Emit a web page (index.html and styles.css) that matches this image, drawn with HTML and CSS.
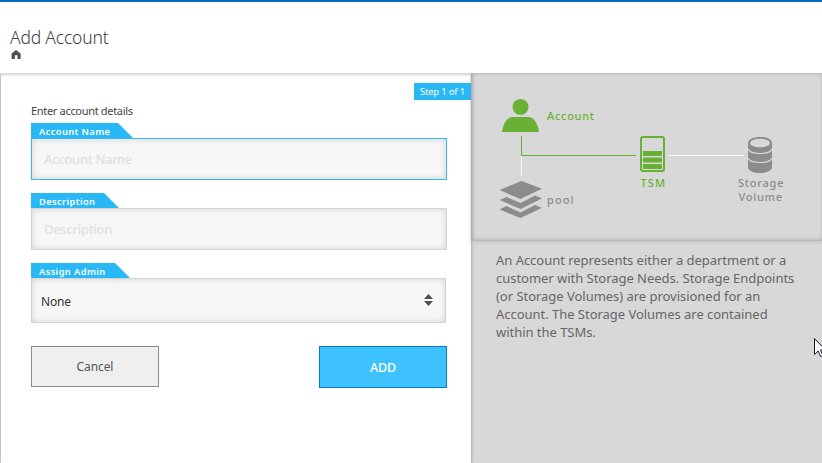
FILE: index.html
```html
<!DOCTYPE html>
<html lang="en">
<head>
<meta charset="utf-8">
<title>Add Account</title>
<link rel="stylesheet" href="styles.css">
</head>
<body>
<header class="header">
  <h1 class="title">Add Account</h1>
  <svg class="home" width="10" height="9" viewBox="0 0 10 9"><path d="M5 0L9.600 3.600V9H6.500V5.300H3.900V9H.6V3.600Z" fill="#505050"/></svg>
</header>
<main class="main">
  <form class="form">
    <div class="step">Step 1 of 1</div>
    <p class="intro">Enter account details</p>
    <div class="field">
      <label class="tab tab-name" for="name"><span>Account Name</span></label>
      <input class="input active" id="name" placeholder="Account Name">
    </div>
    <div class="field">
      <label class="tab tab-desc" for="desc"><span>Description</span></label>
      <input class="input" id="desc" placeholder="Description">
    </div>
    <div class="field field-select">
      <div class="tab tab-admin"><span>Assign Admin</span></div>
      <div class="select"><span>None</span>
        <svg width="9" height="12" viewBox="0 0 9 12"><path d="M0 5L4.5 0L9 5ZM0 7L4.5 12L9 7Z" fill="#505050"/></svg>
      </div>
    </div>
    <div class="actions">
      <button class="btn cancel" type="button">Cancel</button>
      <button class="btn add" type="button">ADD</button>
    </div>
  </form>
  <aside class="side">
    <div class="diagram">
      <svg width="351" height="167" viewBox="471 73 351 167">
        <g fill="#69b135">
          <circle cx="520.5" cy="107" r="8"/>
          <path d="M502 132C503 125 506 117 513 117H528C535 117 538 125 539 132Z"/>
        </g>
        <path d="M521.5 156V176" stroke="#fff"/>
        <path d="M521.5 136V155.5H636" fill="none" stroke="#69b135"/>
        <path d="M668 155.500H744" stroke="#fff"/>
        <g fill="#8c8c8c">
          <path d="M499.500 190L521.500 181L542 188.800L520.500 199Z"/>
          <path d="M499.500 200L506.500 197L520.500 203L535 195.500L542 198.500L520.500 209Z"/>
          <path d="M499.500 209.500L506.500 206L520.500 212.500L535 205L542 207.800L520.500 218Z"/>
        </g>
        <rect x="641" y="137" width="23" height="34" rx="2" fill="none" stroke="#69b135" stroke-width="2"/>
        <path d="M643 151H662V156H643ZM643 157.500H662V162.500H643ZM643 164H662V169H643Z" fill="#69b135"/>
        <path d="M643.500 153.500H661.500M643.500 160H661.500M643.500 166.500H661.500" stroke="#5faa2d" stroke-width=".7"/>
        <path d="M748 143C748 135 772 135 772 143V167C772 175 748 175 748 167Z" fill="#8c8c8c"/>
        <ellipse cx="760" cy="143" rx="10" ry="4.300" fill="#d8d8d8"/>
        <path d="M748 149C750 155 770 155 772 149M748 158C750 164 770 164 772 158" fill="none" stroke="#d8d8d8" stroke-width="1.200"/>
        <g class="green">
          <text x="547" y="120" textLength="47">Account</text>
          <text x="640.500" y="187" textLength="24.500">TSM</text>
        </g>
        <g class="gray">
          <text x="547" y="204" textLength="26.500">pool</text>
          <text x="738" y="187" textLength="45.500">Storage</text>
          <text x="738.500" y="201" textLength="43.500">Volume</text>
        </g>
      </svg>
    </div>
    <p class="about">An Account represents either a department or a<br>customer with Storage Needs. Storage Endpoints<br>(or Storage Volumes) are provisioned for an<br>Account. The Storage Volumes are contained<br>within the TSMs.</p>
  </aside>
</main>
<svg class="cursor" width="12" height="19" viewBox="0 0 12 19"><path d="M.5 .5V16.500L4.200 13L6.700 18.500L9 17.500L6.500 12H11.500Z" fill="#fff" stroke="#15152a"/></svg>
</body>
</html>
```
FILE: styles.css
```css
* { box-sizing: border-box; }
body {
  margin: 0;
  width: 822px;
  height: 463px;
  overflow: hidden;
  background: #fff;
  color: #444;
  font-family: "Noto Sans", sans-serif;
}
.header {
  height: 73px;
  border-top: 2px solid #086dbc;
  padding: 22px 0 0 10px;
}
.title {
  margin: 0;
  font-size: 17.5px;
  line-height: 26px;
  font-weight: 300;
  letter-spacing: -0.2px;
  color: #404040;
}
.home { display: block; margin: 0 0 0 1px; }
.main { display: flex; height: 390px; }
.form {
  position: relative;
  width: 471px;
  padding: 29px 24px 0 31px;
  background: repeating-linear-gradient(#b4b4b4 0 1px, #cfcfcf 1px 2px) 0 0 / 1px 100% no-repeat;
  box-shadow: inset 0 3px 3px -1px #d2d2d2;
}
.step {
  position: absolute;
  top: 10px;
  right: 0;
  width: 57px;
  height: 17px;
  background: #29b8f6;
  color: #fff;
  font-size: 9.3px;
  line-height: 17px;
  text-align: center;
  letter-spacing: -0.1px;
}
.intro { margin: 0; height: 21px; font-size: 11px; line-height: 17px; letter-spacing: -0.32px; }
.field { height: 70px; }
.field-select { height: 83px; }
.tab {
  display: block;
  height: 15px;
  padding-left: 8px;
  background: #29b8f6;
  clip-path: polygon(0 0, calc(100% - 15px) 0, 100% 100%, 0 100%);
  color: #fff;
  font-size: 9.3px;
  font-weight: 600;
  line-height: 17px;
  letter-spacing: 0.4px;
  white-space: nowrap;
}
.tab-name { width: 102px; }
.tab-desc { width: 88px; }
.tab-admin { width: 99px; }
.input {
  display: block;
  width: 416px;
  height: 42px;
  border: 1px solid #d4d4d4;
  border-radius: 0;
  padding: 0 12px;
  outline: 0;
  background: #f7f7f7;
  box-shadow: inset 0 0 6px #d0d0d0;
  font: 500 13px "Noto Sans", sans-serif;
  letter-spacing: -0.3px;
}
.input.active { border-color: #36b9f0; }
.input::placeholder { color: #e0e0e0; opacity: 1; }
.select {
  display: flex;
  align-items: center;
  justify-content: space-between;
  width: 415px;
  height: 45px;
  padding: 0 12px 0 9px;
  border: 1px solid #d4d4d4;
  background: #f7f7f7;
  box-shadow: inset 0 0 6px #d0d0d0;
  font-size: 12px;
  letter-spacing: -0.2px;
  color: #333;
}
.select span { padding-top: 2px; }
.select svg { margin-bottom: 2px; }
.actions { display: flex; justify-content: space-between; align-items: flex-start; width: 416px; }
.btn { width: 128px; padding: 0; font-family: "Noto Sans", sans-serif; }
.cancel { height: 41px; border: 1px solid #8b8b8b; background: #efefef; color: #555; font-size: 12px; letter-spacing: -0.1px; }
.add { height: 42px; border: 1px solid #087bb8; background: #3dc2fd; color: #fff; font-size: 12.5px; font-weight: 500; letter-spacing: -0.2px; }
.side { width: 351px; background: #d8d8d8; box-shadow: inset 3px 0 3px -2px #aaa; }
.diagram {
  height: 168px;
  border-bottom: 1px solid #b8b8b8;
  box-shadow: inset 1px 0 4px #a8a8a8, 0 2px 3px #c8c8c8;
}
.diagram svg { display: block; }
.diagram text { font-size: 11px; font-weight: 500; }
.green { fill: #69b135; }
.gray { fill: #8c8c8c; }
.about { margin: 10px 0 0 25px; font-size: 13px; line-height: 18px; letter-spacing: -0.03px; color: #666; white-space: nowrap; }
.cursor { position: absolute; left: 814px; top: 338px; }
```
